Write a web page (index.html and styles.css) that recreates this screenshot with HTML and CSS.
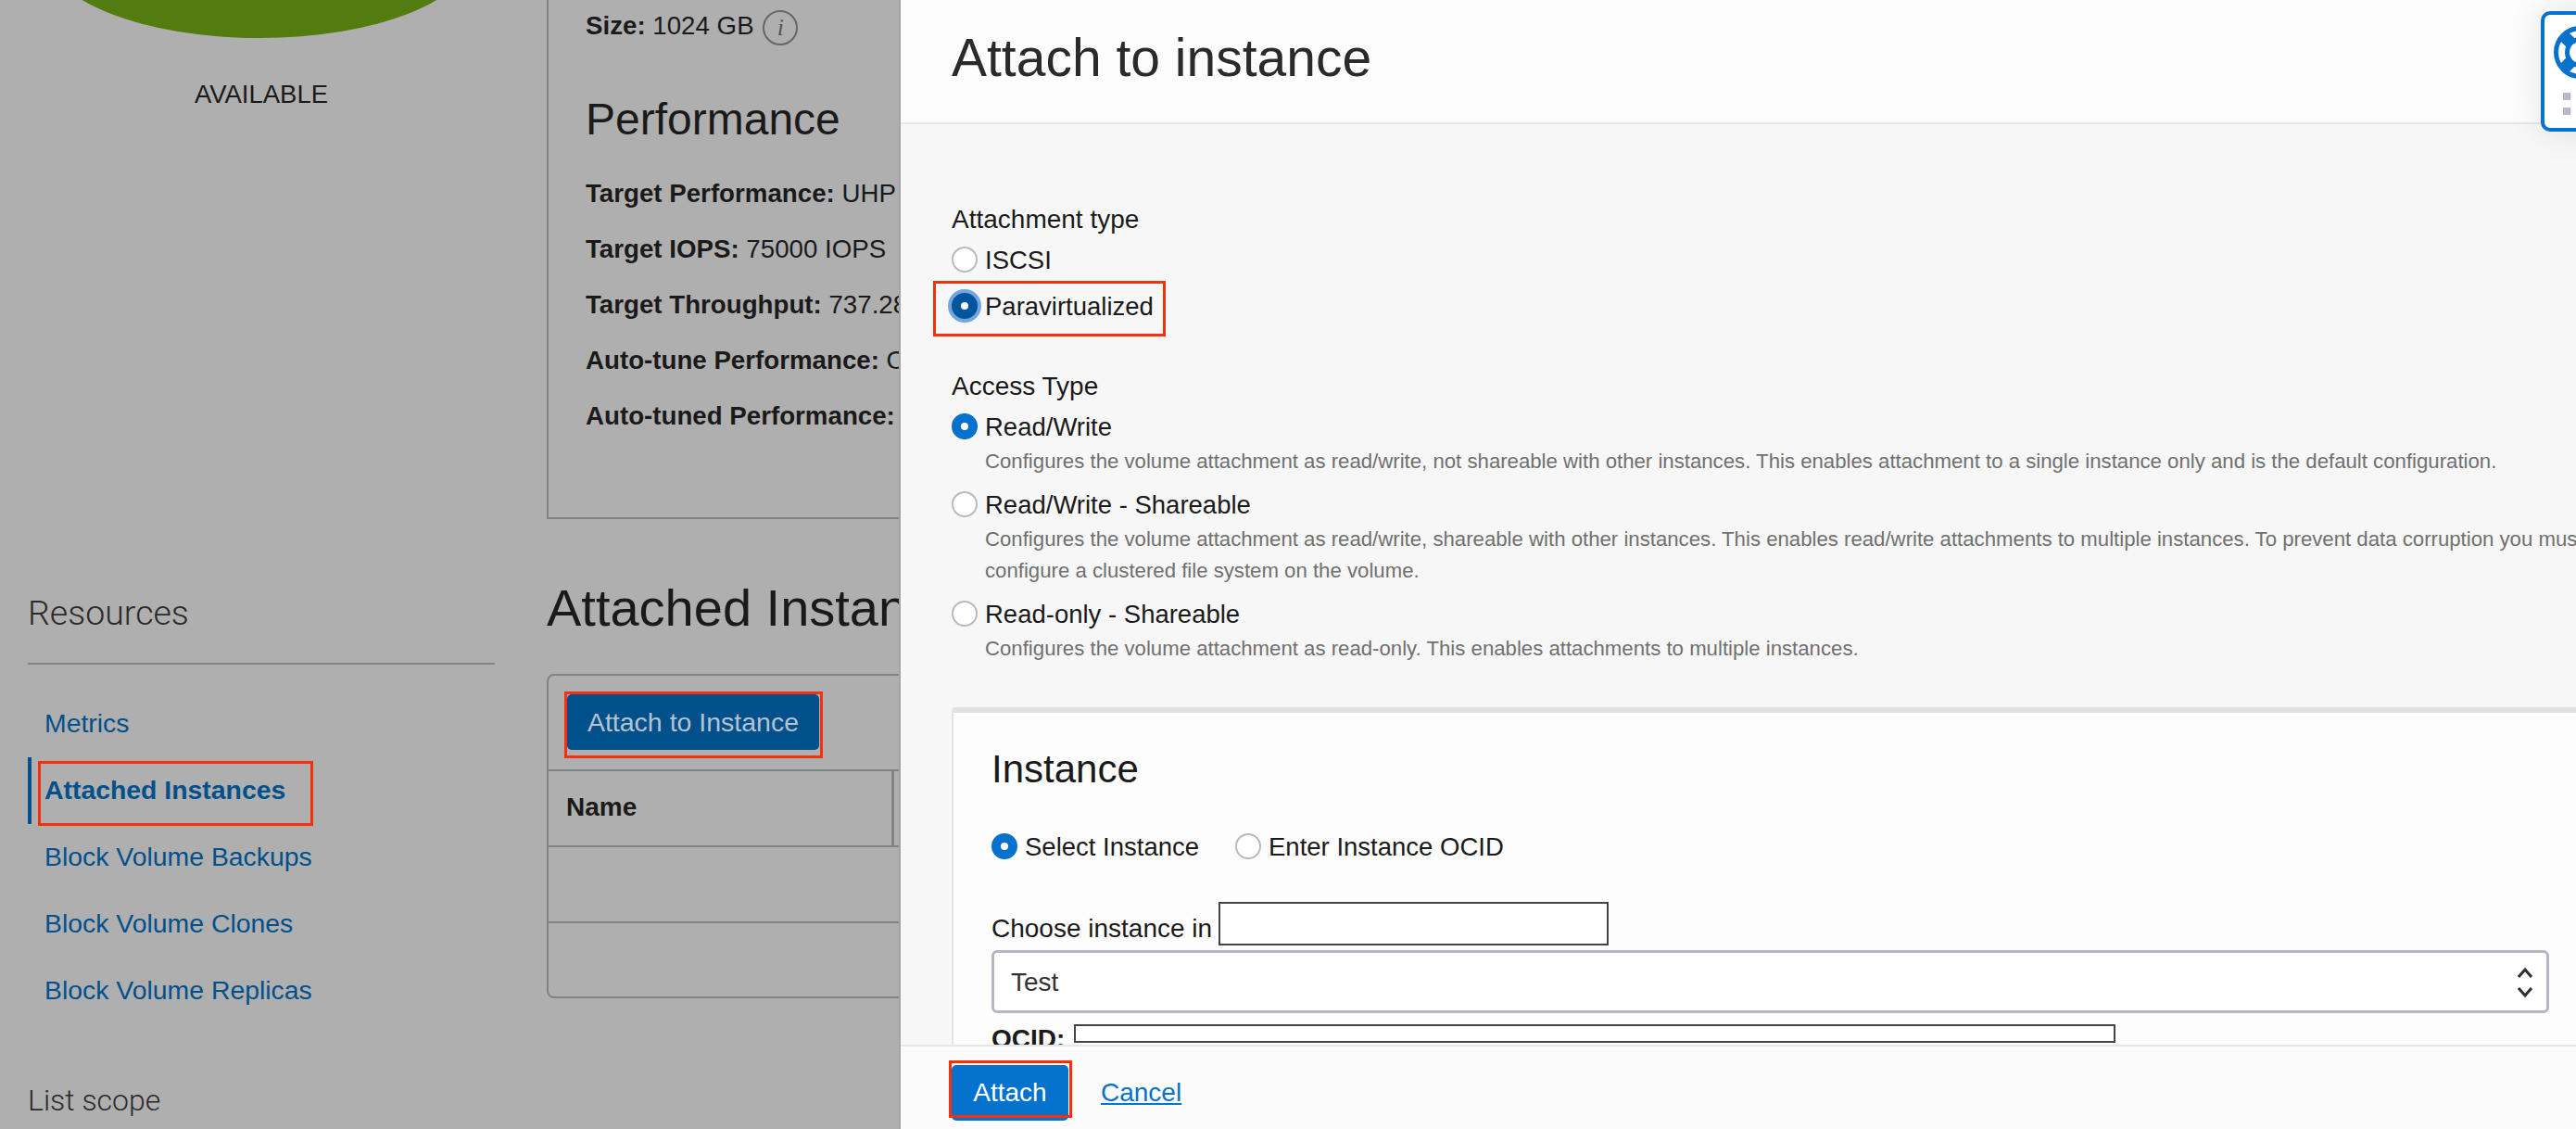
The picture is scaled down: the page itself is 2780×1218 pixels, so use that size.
FILE: index.html
```html
<!DOCTYPE html>
<html lang="en">
<head>
    <meta charset="UTF-8">
    <meta name="viewport" content="width=device-width, initial-scale=1.0">
    <title>Attach to instance</title>
    <link rel="stylesheet" href="styles.css">
</head>
<body>
    <div class="page">
        <aside class="sidebar">
            <svg class="status-icon" width="504" height="41" viewBox="0 0 504 41">
                <ellipse cx="250" cy="-51" rx="230" ry="92" fill="#527c0f"/>
            </svg>
            <div class="status-label">AVAILABLE</div>
            <h2 class="side-title resources-title">Resources</h2>
            <nav class="side-menu">
                <a href="#">Metrics</a>
                <a href="#" class="active">Attached Instances<span class="mark mark-menu"></span></a>
                <a href="#">Block Volume Backups</a>
                <a href="#">Block Volume Clones</a>
                <a href="#">Block Volume Replicas</a>
            </nav>
            <h2 class="side-title scope-title">List scope</h2>
        </aside>

        <main class="content">
            <section class="details">
                <p class="size-row"><b>Size:</b> 1024 GB <span class="info">i</span></p>
                <h3>Performance</h3>
                <p><b>Target Performance:</b> UHP</p>
                <p><b>Target IOPS:</b> 75000 IOPS</p>
                <p><b>Target Throughput:</b> 737.28 MB/s</p>
                <p><b>Auto-tune Performance:</b> Off</p>
                <p><b>Auto-tuned Performance:</b> UHP</p>
            </section>
            <h2 class="section-title">Attached Instances</h2>
            <section class="table-card">
                <div class="toolbar">
                    <button class="btn-dim">Attach to Instance<span class="mark mark-toolbar"></span></button>
                </div>
                <div class="table-head"><div class="table-name">Name</div></div>
                <div class="table-row"></div>
                <div class="table-row last"></div>
            </section>
        </main>
    </div>

    <div class="panel">
        <header class="panel-head">
            <h1>Attach to instance</h1>
        </header>
        <div class="panel-body">
            <div class="field-label first">Attachment type</div>
            <label class="radio"><span class="dot"></span>ISCSI</label>
            <label class="radio"><span class="dot focused"></span>Paravirtualized<span class="mark mark-para"></span></label>

            <div class="field-label second">Access Type</div>
            <label class="radio"><span class="dot checked"></span>Read/Write</label>
            <p class="hint">Configures the volume attachment as read/write, not shareable with other instances. This enables attachment to a single instance only and is the default configuration.</p>
            <label class="radio"><span class="dot"></span>Read/Write - Shareable</label>
            <p class="hint">Configures the volume attachment as read/write, shareable with other instances. This enables read/write attachments to multiple instances. To prevent data corruption you must<br>configure a clustered file system on the volume.</p>
            <label class="radio"><span class="dot"></span>Read-only - Shareable</label>
            <p class="hint">Configures the volume attachment as read-only. This enables attachments to multiple instances.</p>

            <section class="instance-card">
                <h2>Instance</h2>
                <div class="radio-row">
                    <label class="radio"><span class="dot checked"></span>Select Instance</label>
                    <label class="radio"><span class="dot"></span>Enter Instance OCID</label>
                </div>
                <div class="choose-label">Choose instance in r<span class="redact redact-comp"></span></div>
                <div class="select-box">
                    <span>Test</span>
                    <svg width="20" height="34" viewBox="0 0 20 34">
                        <path d="M3 11 L10 3 L17 11 M3 23 L10 31 L17 23" fill="none" stroke="#2b2f33" stroke-width="3"/>
                    </svg>
                </div>
                <div class="ocid"><b>OCID:</b><span class="redact redact-ocid"></span></div>
            </section>
        </div>
        <footer class="panel-foot">
            <button class="btn-primary">Attach<span class="mark mark-attach"></span></button>
            <a href="#" class="cancel">Cancel</a>
        </footer>

        <div class="help-tab">
            <svg width="57" height="57" viewBox="0 0 57 57">
                <circle cx="28.5" cy="28.5" r="26" fill="#fff" stroke="#0572ce" stroke-width="5"/>
                <path d="M10.5 10.5 L46.5 46.5 M46.5 10.5 L10.5 46.5" stroke="#0572ce" stroke-width="13"/>
                <circle cx="28.5" cy="28.5" r="14" fill="#fff" stroke="#0572ce" stroke-width="5"/>
            </svg>
            <div class="grip"><i></i><i></i></div>
        </div>
    </div>
</body>
</html>
```

FILE: styles.css
```css
* {
    box-sizing: border-box;
}
html, body {
    height: 100%;
}
body {
    margin: 0;
    overflow: hidden;
    position: relative;
    background-color: #afafaf;
    color: #1a1a1a;
    font-family: "Liberation Sans", Arial, sans-serif;
    font-size: 28px;
}
.page {
    display: flex;
    height: 1218px;
    padding-left: 30px;
}
.sidebar {
    width: 504px;
    flex: none;
}
.status-icon {
    display: block;
}
.status-label {
    margin-top: 44px;
    font-size: 27.5px;
    line-height: 34px;
    text-align: center;
}
.side-title {
    margin: 0;
    font-family: Roboto, "Liberation Sans", sans-serif;
    font-weight: 300;
    line-height: 44px;
    color: #2a2a2a;
}
.resources-title {
    margin-top: 520px;
    padding-bottom: 32px;
    font-size: 37.5px;
    border-bottom: 2px solid #7f8489;
}
.scope-title {
    font-size: 32px;
}
.side-menu {
    margin: 28px 0 60px;
}
.side-menu a {
    display: block;
    position: relative;
    height: 72px;
    font-size: 28.4px;
    line-height: 71px;
    padding-left: 18px;
    color: #00508c;
    text-decoration: none;
}
.side-menu a.active {
    font-weight: bold;
    border-left: 4px solid #00508c;
    padding-left: 14px;
}

.content {
    flex: 1;
    margin-left: 56px;
    min-width: 0;
}
.details {
    height: 560px;
    padding-left: 40px;
    border-left: 2px solid #7f8489;
    border-bottom: 2px solid #7f8489;
}
.details p {
    margin: 0;
    height: 60px;
    font-size: 27.7px;
    line-height: 59px;
    white-space: nowrap;
}
.details p.size-row {
    height: 56px;
    line-height: 56px;
}
.details h3 {
    margin: 45px 0 22px;
    font-size: 48px;
    font-weight: normal;
    line-height: 56px;
}
.info {
    display: inline-block;
    width: 38px;
    height: 38px;
    margin-left: 2px;
    border: 2px solid #666;
    border-radius: 50%;
    color: #555;
    font-family: "Liberation Serif", serif;
    font-size: 26px;
    font-style: italic;
    line-height: 33px;
    text-align: center;
    vertical-align: middle;
}
.section-title {
    margin: 64px 0 39px;
    font-size: 56px;
    font-weight: normal;
    line-height: 64px;
    white-space: nowrap;
}
.table-card {
    border: 2px solid #7f8489;
    border-radius: 8px;
    height: 350px;
}
.toolbar {
    height: 101px;
    padding: 20px 20px 0;
}
.btn-dim {
    position: relative;
    width: 272px;
    height: 60px;
    border: none;
    border-radius: 5px;
    background-color: #00508c;
    color: #b5c3cf;
    font: inherit;
    font-size: 28.5px;
    padding: 0;
}
.table-head {
    height: 84px;
    border-top: 2px solid #7f8489;
    border-bottom: 2px solid #7f8489;
}
.table-name {
    width: 373px;
    height: 100%;
    padding-left: 19px;
    border-right: 3px solid #7f8489;
    font-weight: bold;
    line-height: 78px;
}
.table-row {
    height: 82px;
    border-bottom: 2px solid #7f8489;
}
.table-row.last {
    border-bottom: none;
}

/* red annotation boxes from the screenshot */
.mark {
    position: absolute;
    border: 3px solid #f5300d;
}
.mark-menu {
    left: 7px;
    top: 4px;
    width: 297px;
    height: 70px;
}
.mark-toolbar {
    left: -3px;
    top: -3px;
    width: 279px;
    height: 72px;
}
.mark-para {
    left: -20px;
    top: -2px;
    width: 251px;
    height: 60px;
}
.mark-attach {
    left: -3px;
    top: -5px;
    width: 133px;
    height: 62px;
}

.panel {
    position: absolute;
    top: 0;
    right: 0;
    bottom: 0;
    width: 1810px;
    display: flex;
    flex-direction: column;
    overflow: hidden;
    border-left: 2px solid #a3a3a3;
    background-color: #f7f7f7;
}
.panel-head {
    flex: none;
    height: 134px;
    padding-left: 55px;
    background-color: #fcfcfc;
    border-bottom: 2px solid #e6e6e6;
}
.panel-head h1 {
    margin: 0;
    font-size: 57px;
    font-weight: normal;
    line-height: 124px;
    color: #2a2a2a;
}
.panel-body {
    flex: 1;
    min-height: 0;
    overflow: hidden;
    padding-left: 55px;
}
.field-label {
    line-height: 36px;
}
.field-label.first {
    margin-top: 85px;
}
.field-label.second {
    margin-top: 44px;
}
.radio {
    position: relative;
    display: flex;
    align-items: center;
    height: 50px;
    padding-top: 2px;
    font-size: 27.5px;
    white-space: nowrap;
}
.dot {
    flex: none;
    width: 28px;
    height: 28px;
    margin: -2px 8px 0 0;
    border: 2px solid #b5bbc4;
    border-radius: 50%;
    background-color: #fff;
}
.dot.checked {
    border: 10px solid #0572ce;
}
.dot.focused {
    border: 10px solid #00559f;
    box-shadow: 0 0 0 4px #73a5de;
}
.hint {
    margin: -4px 0 4px;
    padding-left: 36px;
    font-size: 22.2px;
    line-height: 34px;
    color: #707070;
    white-space: nowrap;
}
.instance-card {
    width: 1900px;
    height: 420px;
    margin-top: 46px;
    padding-left: 41px;
    background-color: #fdfdfd;
    border-left: 2px solid #e4e4e4;
    border-top: 6px solid #dfe2e5;
    border-radius: 4px 0 0 0;
}
.instance-card h2 {
    margin: 0;
    padding-top: 37px;
    font-size: 42px;
    font-weight: normal;
    line-height: 48px;
}
.radio-row {
    display: flex;
    gap: 39px;
    margin-top: 34px;
}
.choose-label {
    position: relative;
    margin-top: 46px;
    line-height: 36px;
    white-space: nowrap;
}
.redact {
    position: absolute;
    background-color: #fff;
    border: 2px solid #444;
}
.redact-comp {
    left: 245px;
    top: -11px;
    width: 421px;
    height: 47px;
}
.select-box {
    display: flex;
    align-items: center;
    justify-content: space-between;
    width: 1681px;
    height: 68px;
    margin-top: 5px;
    padding: 2px 13px 0 18px;
    background-color: #fff;
    border: 3px solid #b3b8c2;
    border-radius: 6px;
    color: #333;
}
.ocid {
    position: relative;
    margin-top: 10px;
    line-height: 36px;
    white-space: nowrap;
}
.redact-ocid {
    left: 89px;
    top: 2px;
    width: 1124px;
    height: 20px;
}
.panel-foot {
    flex: none;
    position: relative;
    display: flex;
    align-items: center;
    gap: 35px;
    height: 91px;
    padding: 11px 0 0 55px;
    background-color: #fbfbfb;
    border-top: 2px solid #e6e6e6;
}
.btn-primary {
    position: relative;
    width: 126px;
    height: 60px;
    border: none;
    border-radius: 5px;
    background-color: #0572ce;
    color: #fff;
    font: inherit;
    padding: 0;
}
.cancel {
    color: #0572ce;
}

.help-tab {
    position: absolute;
    top: 12px;
    left: 1770px;
    width: 90px;
    height: 130px;
    padding: 12px 0 0 10px;
    background-color: #fff;
    border: 4px solid #0572ce;
    border-radius: 10px;
    box-shadow: 0 0 36px rgba(0, 0, 0, 0.1);
}
.help-tab svg {
    display: block;
}
.grip {
    margin: 15px 0 0 10px;
}
.grip i {
    display: block;
    width: 8px;
    height: 8px;
    margin-bottom: 8px;
    background-color: #b5bbc4;
}
```
